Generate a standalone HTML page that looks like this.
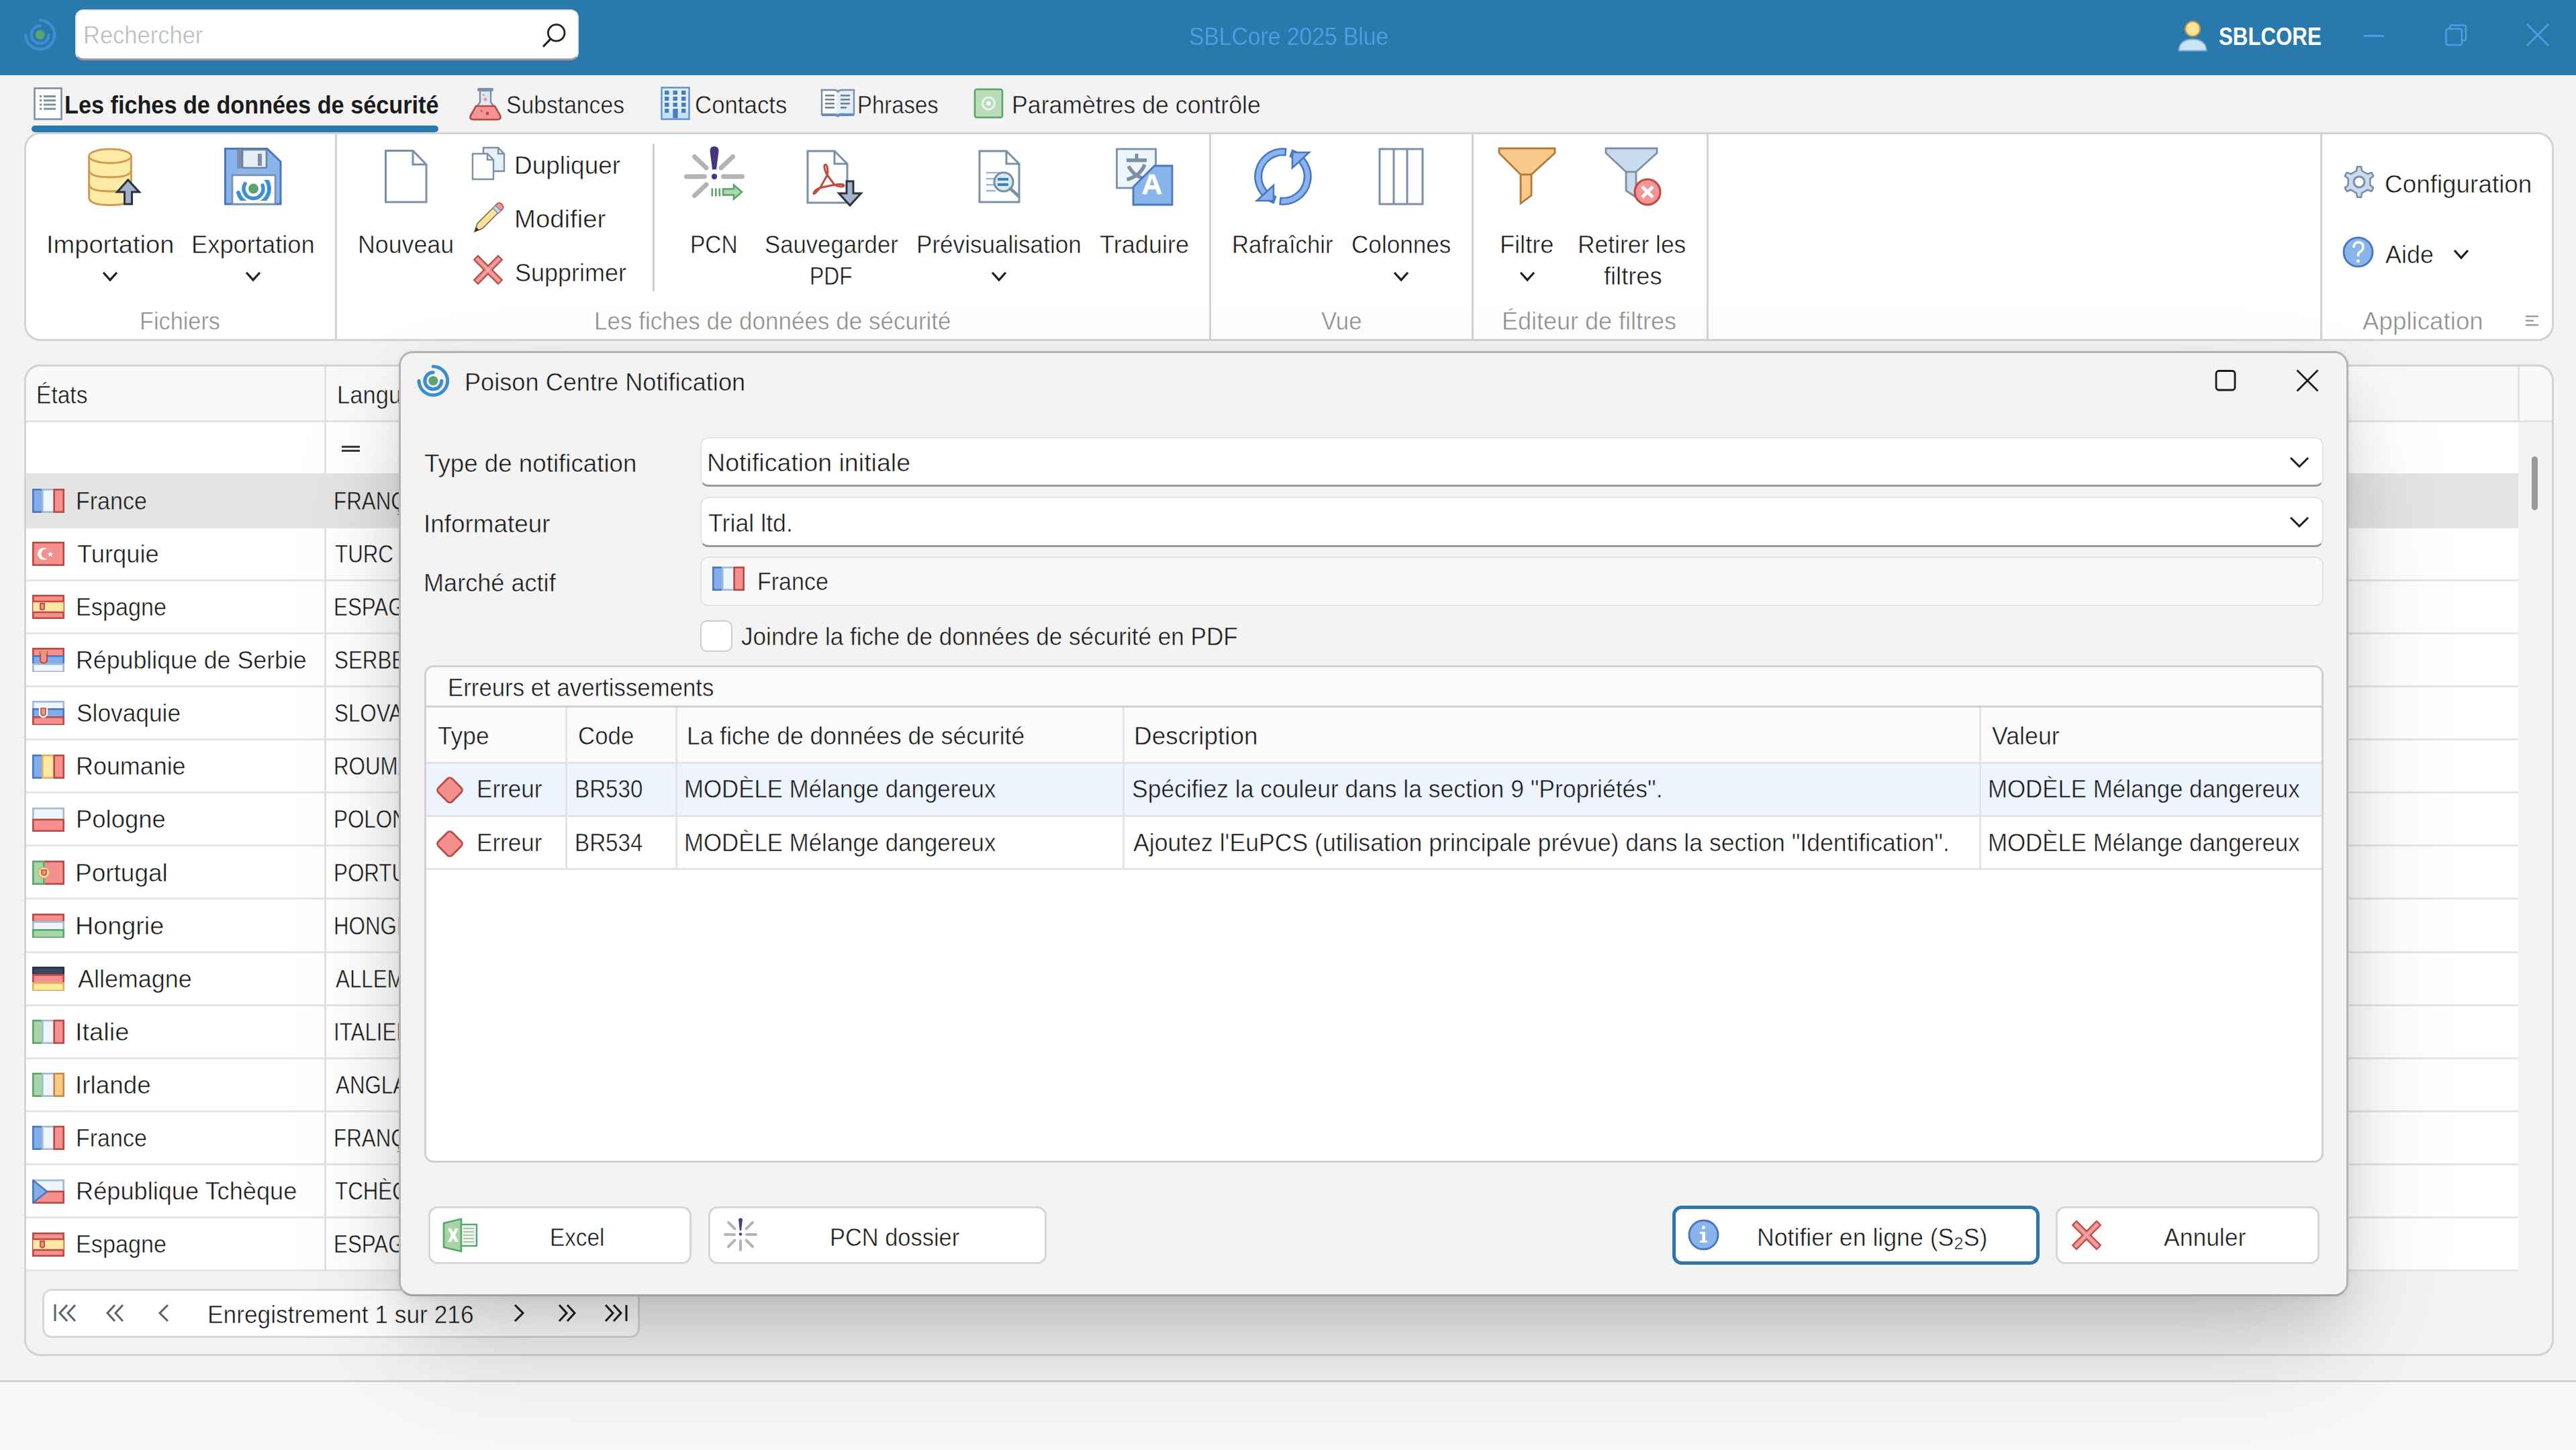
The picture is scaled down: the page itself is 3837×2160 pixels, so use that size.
<!DOCTYPE html>
<html><head><meta charset="utf-8"><style>
html,body{margin:0;padding:0;}
body{width:3837px;height:2160px;overflow:hidden;position:relative;background:#f3f3f3;font-family:'Liberation Sans', sans-serif;}
div,svg{box-sizing:border-box;}
</style></head><body>
<div style="position:absolute;left:0px;top:0px;width:3837px;height:112px;background:#2a79ad;"></div>
<svg style="position:absolute;left:34.3px;top:26.3px;" width="51.4" height="51.4" viewBox="0 0 51.4 51.4"><path d="M25.70,4.20 A21.5,21.5 0 1 1 4.20,25.70" fill="none" stroke="#3f8dd3" stroke-width="4.2" stroke-linecap="round"/><path d="M25.70,12.70 A13,13 0 1 0 38.70,25.70" fill="none" stroke="#3f8dd3" stroke-width="4.2" stroke-linecap="round"/><circle cx="25.7" cy="25.7" r="7" fill="#5aa56b"/></svg>
<div style="position:absolute;left:112px;top:14px;width:750px;height:76px;background:#fff;border-radius:12px;border:2px solid #e4e4e4;border-bottom:3px solid #9b9b9b;"></div>
<svg style="position:absolute;left:800px;top:30px;" width="50" height="50" viewBox="0 0 50 50"><circle cx="28.7" cy="18.9" r="12.3" fill="none" stroke="#1f1f1f" stroke-width="2.8"/><line x1="19.6" y1="28.6" x2="9" y2="39.5" stroke="#1f1f1f" stroke-width="3"/></svg>
<svg style="position:absolute;left:3240px;top:28px;" width="54" height="52" viewBox="0 0 54 52"><circle cx="26" cy="15" r="11" fill="#fde79b" stroke="#c9954a" stroke-width="2.2"/><path d="M5.5,47.5 C5.5,36 14,30.5 26,30.5 C38,30.5 46.5,36 46.5,47.5 Z" fill="#c7e5f8" stroke="#8ca7c7" stroke-width="2"/></svg>
<div style="position:absolute;left:3521px;top:52px;width:30px;height:3px;background:#4a9de8;"></div>
<svg style="position:absolute;left:3638px;top:32px;" width="42" height="42" viewBox="0 0 42 42"><rect x="11" y="5.5" width="24" height="23" rx="3" fill="none" stroke="#4a9de8" stroke-width="2.6"/><rect x="5.5" y="11" width="23.5" height="24" rx="3" fill="#2a79ad" stroke="#4a9de8" stroke-width="2.6"/></svg>
<svg style="position:absolute;left:3760px;top:32px;" width="40" height="40" viewBox="0 0 40 40"><path d="M4,4 L36,36 M36,4 L4,36" stroke="#4a9de8" stroke-width="2.8"/></svg>
<svg style="position:absolute;left:48px;top:128px;" width="48" height="52" viewBox="0 0 48 52"><rect x="3.5" y="3.5" width="40" height="46" fill="#fff" stroke="#7b8fa6" stroke-width="2.6"/><g fill="#7b8fa6"><rect x="11" y="14" width="3.2" height="3"/><rect x="17" y="14" width="18" height="3"/><rect x="11" y="20.2" width="3.2" height="3"/><rect x="17" y="20.2" width="18" height="3"/><rect x="11" y="26.4" width="3.2" height="3"/><rect x="17" y="26.4" width="18" height="3"/><rect x="11" y="32.6" width="3.2" height="3"/><rect x="17" y="32.6" width="18" height="3"/></g></svg>
<div style="position:absolute;left:47px;top:187px;width:606px;height:10px;background:#2a79ad;border-radius:5px;"></div>
<svg style="position:absolute;left:697px;top:128px;" width="52" height="52" viewBox="0 0 52 52"><rect x="14" y="3" width="24" height="5" rx="2" fill="#7b8fa6"/><path d="M18,7 L18,24 L4,44 Q2,50 8,50 L44,50 Q50,50 48,44 L34,24 L34,7 Z" fill="#ddeaf6" stroke="#7b8fa6" stroke-width="2.4"/><path d="M12,30 L40,30 L48,44 Q50,50 44,50 L8,50 Q2,50 4,44 Z" fill="#f49494" stroke="#b84a3f" stroke-width="2.6"/><circle cx="23.5" cy="13.5" r="1.6" fill="#f49494"/><circle cx="26" cy="20" r="2.6" fill="#f49494"/><circle cx="20" cy="37" r="1.3" fill="#b84a3f"/><circle cx="29" cy="41" r="2.4" fill="#b84a3f"/></svg>
<svg style="position:absolute;left:984px;top:129px;" width="44" height="50" viewBox="0 0 44 50"><rect x="1.5" y="1.5" width="41" height="47" fill="#dceefb" stroke="#5b8fcf" stroke-width="2.4"/><g fill="#4a7bbf"><rect x="6.0" y="6" width="6.5" height="6"/><rect x="18.5" y="6" width="6.5" height="6"/><rect x="31.0" y="6" width="6.5" height="6"/><rect x="6.0" y="15" width="6.5" height="6"/><rect x="18.5" y="15" width="6.5" height="6"/><rect x="31.0" y="15" width="6.5" height="6"/><rect x="6.0" y="24" width="6.5" height="6"/><rect x="18.5" y="24" width="6.5" height="6"/><rect x="31.0" y="24" width="6.5" height="6"/><rect x="6.0" y="33" width="6.5" height="6"/><rect x="31.0" y="33" width="6.5" height="6"/><rect x="18.5" y="33" width="7" height="14"/></g><rect x="3" y="39" width="38" height="8" fill="#bcdaf3" opacity="0.7"/><rect x="18.5" y="33" width="7" height="14" fill="#4a7bbf"/></svg>
<svg style="position:absolute;left:1222px;top:131px;" width="52" height="46" viewBox="0 0 52 46"><path d="M2,3 L20,3 Q26,3 26,7 Q26,3 32,3 L50,3 L50,39 L30,39 Q26,39 26,43 Q26,39 22,39 L2,39 Z" fill="#e3eef8" stroke="#7b8fa6" stroke-width="2.4"/><path d="M4,5 L24,5 L24,38 L4,38 Z" fill="#fff"/><g fill="#6e8197"><rect x="7" y="10" width="14" height="2.6"/><rect x="7" y="16" width="14" height="2.6"/><rect x="7" y="22" width="14" height="2.6"/><rect x="7" y="28" width="14" height="2.6"/><rect x="30" y="10" width="14" height="2.6"/><rect x="30" y="16" width="14" height="2.6"/><rect x="30" y="22" width="14" height="2.6"/><rect x="30" y="28" width="9" height="2.6"/></g><path d="M2,39 L22,39 Q26,39 26,44 Q26,39 30,39 L50,39 L50,42 L30,42 Q26,42 26,45 Q26,42 22,42 L2,42 Z" fill="#5b8fcf"/></svg>
<svg style="position:absolute;left:1450px;top:131px;" width="45" height="46" viewBox="0 0 45 46"><rect x="2" y="2" width="41" height="42" rx="3" fill="#b9dcb9" stroke="#5aa56b" stroke-width="2.6"/><circle cx="22.5" cy="23" r="9" fill="none" stroke="#e8f4e8" stroke-width="3"/><circle cx="22.5" cy="23" r="3.2" fill="#fff"/></svg>
<div style="position:absolute;left:36px;top:197px;width:3768px;height:311px;background:#fff;border:3px solid #d3d3d3;border-radius:24px;"></div>
<div style="position:absolute;left:499px;top:199px;width:3px;height:307px;background:#d3d3d3;"></div>
<div style="position:absolute;left:1801px;top:199px;width:3px;height:307px;background:#d3d3d3;"></div>
<div style="position:absolute;left:2192px;top:199px;width:3px;height:307px;background:#d3d3d3;"></div>
<div style="position:absolute;left:2542px;top:199px;width:3px;height:307px;background:#d3d3d3;"></div>
<div style="position:absolute;left:3456px;top:199px;width:3px;height:307px;background:#d3d3d3;"></div>
<div style="position:absolute;left:972px;top:214px;width:3px;height:220px;background:#cfcfcf;"></div>
<svg style="position:absolute;left:128px;top:218px;" width="86" height="90" viewBox="0 0 86 90"><path d="M4.6,14 L4.6,76 Q4.6,87.5 36,87.5 Q67.4,87.5 67.4,76 L67.4,14" fill="#fdeba6" stroke="#d29b52" stroke-width="3"/><ellipse cx="36" cy="14.5" rx="31.4" ry="10.5" fill="#fdeba6" stroke="#d29b52" stroke-width="3"/><path d="M4.6,35 Q4.6,46 36,46 Q67.4,46 67.4,35" fill="none" stroke="#d29b52" stroke-width="3"/><path d="M4.6,56 Q4.6,67 36,67 Q50,67 58,65" fill="none" stroke="#d29b52" stroke-width="3"/><path d="M62.7,50 L79.5,68 L68.5,68 L68.5,86 L57.5,86 L57.5,68 L46.5,68 Z" fill="#9fb0c8" stroke="#2c2f3c" stroke-width="3"/></svg>
<svg style="position:absolute;left:151.0px;top:402.5px;" width="26" height="17" viewBox="0 0 26 17"><path d="M3,3 L13.0,14 L23,3" fill="none" stroke="#1f1f1f" stroke-width="3.2"/></svg>
<svg style="position:absolute;left:334px;top:220px;" width="86" height="86" viewBox="0 0 86 86"><path d="M1.5,1.5 L64,1.5 L84,21 L84,84 L1.5,84 Z" fill="#89b4ec" stroke="#4a77bf" stroke-width="3"/><rect x="19" y="2" width="8" height="29" fill="#7d8fa8"/><rect x="27" y="3" width="36" height="27" rx="2" fill="#e6eef5" stroke="#6e8197" stroke-width="2.6"/><rect x="50" y="9" width="6" height="18" fill="#7d8fa8"/><rect x="12" y="41" width="64" height="43" fill="#fff" stroke="#7b8fa6" stroke-width="2.6"/><clipPath id="fl"><rect x="13.5" y="48" width="61" height="31"/></clipPath><g clip-path="url(#fl)"><path d="M43.50,37.60 A23.4,23.4 0 1 1 20.90,67.06" fill="none" stroke="#3d8ed3" stroke-width="6" stroke-linecap="round"/></g><path d="M57.13,56.04 A14.5,14.5 0 1 1 30.94,53.75" fill="none" stroke="#3d8ed3" stroke-width="5.5" stroke-linecap="round"/><circle cx="43.5" cy="61" r="7.5" fill="#5aa56b"/></svg>
<svg style="position:absolute;left:364.0px;top:402.5px;" width="26" height="17" viewBox="0 0 26 17"><path d="M3,3 L13.0,14 L23,3" fill="none" stroke="#1f1f1f" stroke-width="3.2"/></svg>
<svg style="position:absolute;left:572px;top:222px;" width="66" height="82" viewBox="0 0 66 82"><path d="M2.5,2.5 L43,2.5 L63,23 L63,79 L2.5,79 Z" fill="#fff" stroke="#7b8fa6" stroke-width="3"/><path d="M43,2.5 L43,23 L63,23" fill="none" stroke="#7b8fa6" stroke-width="3"/></svg>
<svg style="position:absolute;left:702px;top:218px;" width="52" height="52" viewBox="0 0 52 52"><path d="M18,2 L40,2 L49,11 L49,37 L18,37 Z" fill="#e6f0f9" stroke="#7b8fa6" stroke-width="2.4"/><path d="M40,2 L40,11 L49,11" fill="none" stroke="#7b8fa6" stroke-width="2.4"/><path d="M2,11 L24,11 L33,20 L33,49 L2,49 Z" fill="#fff" stroke="#7b8fa6" stroke-width="2.4"/><path d="M24,11 L24,20 L33,20" fill="none" stroke="#7b8fa6" stroke-width="2.4"/></svg>
<svg style="position:absolute;left:704px;top:300px;" width="48" height="48" viewBox="0 0 48 48"><path d="M3,45 L7,33 L36,4 Q40,1 43,4 Q47,8 44,11 L15,40 Z" fill="#fde39a" stroke="#7b6a4a" stroke-width="1.6"/><path d="M33,7 L41,15 L45,11 Q47,8 43,4 Q40,1 37,3 Z" fill="#f49494" stroke="#b84a3f" stroke-width="1.6"/><path d="M30,10 L38,18 L42,14 L34,6 Z" fill="#c9dcee" stroke="#7b8fa6" stroke-width="1.6"/><path d="M3,45 L5,38 L10,43 Z" fill="#333"/></svg>
<svg style="position:absolute;left:704px;top:379px;" width="46" height="46" viewBox="0 0 46 46"><g transform="scale(1.0)"><path d="M2,8 L8,2 L23,17 L38,2 L44,8 L29,23 L44,38 L38,44 L23,29 L8,44 L2,38 L17,23 Z" fill="#f08a8a" stroke="#bb4a42" stroke-width="2"/><path d="M6,6 L40,40 M40,6 L6,40" stroke="#fbc4c4" stroke-width="1.2" opacity="0.9"/></g></svg>
<svg style="position:absolute;left:1018px;top:217px;" width="92" height="82.0" viewBox="0 0 92 82.0"><g transform="scale(1.0)"><g stroke="#b4b4b8" stroke-width="7" stroke-linecap="round"><line x1="4.5" y1="46" x2="31.5" y2="46"/><line x1="59.5" y1="46" x2="87.5" y2="46"/><line x1="16.5" y1="16.5" x2="34" y2="33"/><line x1="73.5" y1="16.5" x2="56" y2="33"/><line x1="16.5" y1="74.5" x2="34" y2="58"/></g><path d="M39.5,8 Q39.5,1 46,1 Q52.5,1 52.5,8 L49,35.5 L43,35.5 Z" fill="#47357f"/><circle cx="46" cy="46" r="4.2" fill="#47357f"/><g fill="#5aa56b"><rect x="41.5" y="63.5" width="2.6" height="12"/><rect x="47" y="63.5" width="2.6" height="12"/><rect x="52.5" y="63.5" width="2.6" height="12"/></g><path d="M59,64.5 L75,64.5 L75,58.5 L87,69 L75,79.5 L75,73.5 L59,73.5 Z" fill="#a9dab0" stroke="#5aa56b" stroke-width="2.6"/></g></svg>
<svg style="position:absolute;left:1200px;top:222px;" width="88" height="90" viewBox="0 0 88 90"><path d="M3,3 L43,3 L62,22 L62,80 L3,80 Z" fill="#fff" stroke="#7b8fa6" stroke-width="3"/><path d="M43,3 L43,22 L62,22" fill="none" stroke="#7b8fa6" stroke-width="3"/><path d="M32.3,38.7 L21.6,57.8 C17,63 12.5,68 12,66.5 C11.5,64 16,59.5 21.6,57.8 L43,53.3 C50,52 57.5,52 57,54.5 C56.5,57 49,56 43,53.3 L32.3,38.7 C28,32 26.5,23 29.5,23.3 C32.5,23.6 33.5,31 32.3,38.7 Z" fill="none" stroke="#c44a3a" stroke-width="3" stroke-linejoin="round"/><path d="M61,48 L71,48 L71,66 L82.5,66 L66,84 L49.5,66 L61,66 Z" fill="#a3b4cc" stroke="#30323c" stroke-width="3"/></svg>
<svg style="position:absolute;left:1456px;top:222px;" width="70" height="84" viewBox="0 0 70 84"><path d="M3,3 L43,3 L62,22 L62,79 L3,79 Z" fill="#fff" stroke="#7b8fa6" stroke-width="3"/><path d="M43,3 L43,22 L62,22" fill="none" stroke="#7b8fa6" stroke-width="3"/><g fill="#9cb8e0"><rect x="13" y="34" width="22" height="2.5"/><rect x="13" y="43" width="14" height="2.5"/><rect x="13" y="52" width="14" height="2.5"/><rect x="13" y="61" width="14" height="2.5"/></g><circle cx="39" cy="49" r="14" fill="#d8ecf8" stroke="#7b8fa6" stroke-width="3.2"/><path d="M30,43 L46,43 L46,47 L30,47 Z M30,51 L46,51 L46,55 L30,55 Z" fill="#3d7ec2"/><line x1="49" y1="59" x2="61" y2="70" stroke="#7b8fa6" stroke-width="5" stroke-linecap="round"/></svg>
<svg style="position:absolute;left:1475.0px;top:402.5px;" width="26" height="17" viewBox="0 0 26 17"><path d="M3,3 L13.0,14 L23,3" fill="none" stroke="#1f1f1f" stroke-width="3.2"/></svg>
<svg style="position:absolute;left:1660px;top:219px;" width="88" height="88" viewBox="0 0 88 88"><rect x="3.5" y="3" width="58" height="58" fill="#eef5fc" stroke="#7b8fa6" stroke-width="2.8"/><rect x="30.5" y="10" width="5" height="8" fill="#7b8fa6"/><rect x="18" y="17" width="30" height="5.5" fill="#7b8fa6"/><path d="M21,28.5 Q29,44 46,47.5 M45,26 Q39,43 18.5,48.5" fill="none" stroke="#7b8fa6" stroke-width="5.5"/><path d="M59.5,28 L86,28 L86,86 L28,86 L28,59.5 Z" fill="#8ab5ec" stroke="#4a77bf" stroke-width="2.8"/><path d="M41,70.5 L52,40.7 L60,40.7 L71,70.5 L64,70.5 L61.5,63 L50.5,63 L48,70.5 Z M52.5,57 L59.5,57 L56,46.5 Z" fill="#fff"/></svg>
<svg style="position:absolute;left:1867px;top:219px;" width="88" height="88" viewBox="0 0 88 88"><path d="M48.34,2.73 A41.5,41.5 0 0 0 29.81,83.00 L33.06,74.07 A32,32 0 0 1 47.34,12.18 Z" fill="#89b4ec" stroke="#4a77bf" stroke-width="2.6"/><path d="M39.66,85.27 A41.5,41.5 0 0 0 58.19,5.00 L54.94,13.93 A32,32 0 0 1 40.66,75.82 Z" fill="#89b4ec" stroke="#4a77bf" stroke-width="2.6"/><path d="M5,80 L30,80 L30,57 Z" fill="#89b4ec" stroke="#4a77bf" stroke-width="2.6" stroke-linejoin="miter"/><path d="M83,8 L58,8 L58,31 Z" fill="#89b4ec" stroke="#4a77bf" stroke-width="2.6" stroke-linejoin="miter"/></svg>
<svg style="position:absolute;left:2052px;top:219px;" width="70" height="88" viewBox="0 0 70 88"><rect x="3" y="3" width="64" height="82" fill="#fff" stroke="#7b8fa6" stroke-width="3"/><line x1="24" y1="3" x2="24" y2="85" stroke="#7b8fa6" stroke-width="3"/><line x1="44" y1="3" x2="44" y2="85" stroke="#7b8fa6" stroke-width="3"/></svg>
<svg style="position:absolute;left:2074.0px;top:402.5px;" width="26" height="17" viewBox="0 0 26 17"><path d="M3,3 L13.0,14 L23,3" fill="none" stroke="#1f1f1f" stroke-width="3.2"/></svg>
<svg style="position:absolute;left:2231px;top:219px;" width="88" height="88" viewBox="0 0 88 88"><path d="M2,2 L85,2 L85,9 L50,41 L50,72 L34,84 L34,41 L2,9 Z" fill="#fbc98a" stroke="#b17a3a" stroke-width="2.8"/><line x1="34" y1="41" x2="50" y2="41" stroke="#b17a3a" stroke-width="2.8"/></svg>
<svg style="position:absolute;left:2262.0px;top:402.5px;" width="26" height="17" viewBox="0 0 26 17"><path d="M3,3 L13.0,14 L23,3" fill="none" stroke="#1f1f1f" stroke-width="3.2"/></svg>
<svg style="position:absolute;left:2390px;top:219px;" width="90" height="92" viewBox="0 0 90 92"><path d="M2,2 L78,2 L78,9 L47,37 L47,75 L32,65 L32,37 L2,9 Z" fill="#c9dcee" stroke="#7b8fa6" stroke-width="2.8"/><line x1="32" y1="37" x2="47" y2="37" stroke="#7b8fa6" stroke-width="2.8"/><circle cx="64" cy="67" r="19" fill="#f49494" stroke="#bb4a42" stroke-width="3"/><path d="M56,59 L72,75 M72,59 L56,75" stroke="#fff" stroke-width="5"/></svg>
<svg style="position:absolute;left:3490px;top:245px;transform:rotate(0deg)" width="48" height="52" viewBox="0 0 48 52"><path d="M19.96,9.49 L21.02,3.19 L26.98,3.19 L28.04,9.49 L36.28,14.24 L42.26,12.01 L45.24,17.18 L40.32,21.24 L40.32,30.76 L45.24,34.82 L42.26,39.99 L36.28,37.76 L28.04,42.51 L26.98,48.81 L21.02,48.81 L19.96,42.51 L11.72,37.76 L5.74,39.99 L2.76,34.82 L7.68,30.76 L7.68,21.24 L2.76,17.18 L5.74,12.01 L11.72,14.24 Z" fill="#c9dcee" stroke="#7b8fa6" stroke-width="2.6" stroke-linejoin="round"/><circle cx="24" cy="26" r="8" fill="#fff" stroke="#7b8fa6" stroke-width="3.2"/></svg>
<svg style="position:absolute;left:3488px;top:351px;" width="50" height="50" viewBox="0 0 50 50"><circle cx="24.5" cy="24.5" r="21.5" fill="#89b4ec" stroke="#4a77bf" stroke-width="3"/><path d="M18,18 Q18,10 25,10 Q32,10 32,17 Q32,22 26,25 Q24.5,26 24.5,31" fill="none" stroke="#fff" stroke-width="3.4"/><circle cx="24.5" cy="38" r="2.4" fill="#fff"/></svg>
<svg style="position:absolute;left:3653.0px;top:370.0px;" width="26" height="17" viewBox="0 0 26 17"><path d="M3,3 L13.0,14 L23,3" fill="none" stroke="#1f1f1f" stroke-width="3.2"/></svg>
<svg style="position:absolute;left:3760px;top:468px;" width="24" height="20" viewBox="0 0 24 20"><g fill="#9a9a9a"><rect x="2" y="2" width="19" height="2.4"/><rect x="2" y="8.5" width="12" height="2.4"/><rect x="2" y="15" width="19" height="2.4"/></g></svg>
<div style="position:absolute;left:36px;top:543px;width:3768px;height:477px;background:#f3f3f3;border:3px solid #d3d3d3;border-radius:24px;"></div>
<div style="position:absolute;left:36px;top:543px;width:3768px;height:1477px;background:#f3f3f3;border:3px solid #d3d3d3;border-radius:24px;"></div>
<div style="position:absolute;left:0px;top:2056px;width:3837px;height:3px;background:#d0d0d0;"></div>
<div style="position:absolute;left:0px;top:2059px;width:3837px;height:101px;background:#f8f8f8;"></div>
<div style="position:absolute;left:123.5px;top:35.2px;font-size:36px;line-height:36px;font-weight:400;color:#b8bcb9;white-space:nowrap;transform:scaleX(0.9585);transform-origin:0 0;-webkit-text-stroke:0.5px #ffffff;">Rechercher</div>
<div style="position:absolute;left:1770.5px;top:37.2px;font-size:36px;line-height:36px;font-weight:400;color:#4fa3ea;white-space:nowrap;transform:scaleX(0.9340);transform-origin:0 0;-webkit-text-stroke:0.5px #2a79ad;">SBLCore 2025 Blue</div>
<div style="position:absolute;left:3305.1px;top:37.2px;font-size:36px;line-height:36px;font-weight:700;color:#ffffff;white-space:nowrap;transform:scaleX(0.8678);transform-origin:0 0;">SBLCORE</div>
<div style="position:absolute;left:95.9px;top:139.2px;font-size:36px;line-height:36px;font-weight:700;color:#1b1b1b;white-space:nowrap;transform:scaleX(0.9509);transform-origin:0 0;">Les fiches de données de sécurité</div>
<div style="position:absolute;left:753.8px;top:139.2px;font-size:36px;line-height:36px;font-weight:400;color:#1b1b1b;white-space:nowrap;transform:scaleX(0.9357);transform-origin:0 0;-webkit-text-stroke:0.5px #f3f3f3;">Substances</div>
<div style="position:absolute;left:1035.1px;top:139.2px;font-size:36px;line-height:36px;font-weight:400;color:#1b1b1b;white-space:nowrap;transform:scaleX(0.9669);transform-origin:0 0;-webkit-text-stroke:0.5px #f3f3f3;">Contacts</div>
<div style="position:absolute;left:1277.0px;top:139.2px;font-size:36px;line-height:36px;font-weight:400;color:#1b1b1b;white-space:nowrap;transform:scaleX(0.9133);transform-origin:0 0;-webkit-text-stroke:0.5px #f3f3f3;">Phrases</div>
<div style="position:absolute;left:1507.0px;top:139.2px;font-size:36px;line-height:36px;font-weight:400;color:#1b1b1b;white-space:nowrap;transform:scaleX(0.9908);transform-origin:0 0;-webkit-text-stroke:0.5px #f3f3f3;">Paramètres de contrôle</div>
<div style="position:absolute;left:68.8px;top:346.6px;font-size:36px;line-height:36px;font-weight:400;color:#1b1b1b;white-space:nowrap;transform:scaleX(1.0571);transform-origin:0 0;-webkit-text-stroke:0.5px #ffffff;">Importation</div>
<div style="position:absolute;left:285.0px;top:346.6px;font-size:36px;line-height:36px;font-weight:400;color:#1b1b1b;white-space:nowrap;transform:scaleX(1.0090);transform-origin:0 0;-webkit-text-stroke:0.5px #ffffff;">Exportation</div>
<div style="position:absolute;left:208.0px;top:460.9px;font-size:36px;line-height:36px;font-weight:400;color:#8f8f8f;white-space:nowrap;transform:scaleX(0.9516);transform-origin:0 0;-webkit-text-stroke:0.5px #ffffff;">Fichiers</div>
<div style="position:absolute;left:533.0px;top:346.6px;font-size:36px;line-height:36px;font-weight:400;color:#1b1b1b;white-space:nowrap;transform:scaleX(0.9928);transform-origin:0 0;-webkit-text-stroke:0.5px #ffffff;">Nouveau</div>
<div style="position:absolute;left:765.9px;top:229.0px;font-size:36px;line-height:36px;font-weight:400;color:#1b1b1b;white-space:nowrap;transform:scaleX(1.0252);transform-origin:0 0;-webkit-text-stroke:0.5px #ffffff;">Dupliquer</div>
<div style="position:absolute;left:765.8px;top:309.2px;font-size:36px;line-height:36px;font-weight:400;color:#1b1b1b;white-space:nowrap;transform:scaleX(1.0640);transform-origin:0 0;-webkit-text-stroke:0.5px #ffffff;">Modifier</div>
<div style="position:absolute;left:767.0px;top:389.2px;font-size:36px;line-height:36px;font-weight:400;color:#1b1b1b;white-space:nowrap;-webkit-text-stroke:0.5px #ffffff;">Supprimer</div>
<div style="position:absolute;left:1027.8px;top:346.6px;font-size:36px;line-height:36px;font-weight:400;color:#1b1b1b;white-space:nowrap;transform:scaleX(0.9314);transform-origin:0 0;-webkit-text-stroke:0.5px #ffffff;">PCN</div>
<div style="position:absolute;left:1139.4px;top:346.6px;font-size:36px;line-height:36px;font-weight:400;color:#1b1b1b;white-space:nowrap;transform:scaleX(0.9642);transform-origin:0 0;-webkit-text-stroke:0.5px #ffffff;">Sauvegarder</div>
<div style="position:absolute;left:1206.4px;top:393.6px;font-size:36px;line-height:36px;font-weight:400;color:#1b1b1b;white-space:nowrap;transform:scaleX(0.8824);transform-origin:0 0;-webkit-text-stroke:0.5px #ffffff;">PDF</div>
<div style="position:absolute;left:1365.1px;top:346.6px;font-size:36px;line-height:36px;font-weight:400;color:#1b1b1b;white-space:nowrap;transform:scaleX(0.9745);transform-origin:0 0;-webkit-text-stroke:0.5px #ffffff;">Prévisualisation</div>
<div style="position:absolute;left:1637.6px;top:346.6px;font-size:36px;line-height:36px;font-weight:400;color:#1b1b1b;white-space:nowrap;transform:scaleX(1.0031);transform-origin:0 0;-webkit-text-stroke:0.5px #ffffff;">Traduire</div>
<div style="position:absolute;left:885.1px;top:460.9px;font-size:36px;line-height:36px;font-weight:400;color:#8f8f8f;white-space:nowrap;transform:scaleX(0.9729);transform-origin:0 0;-webkit-text-stroke:0.5px #ffffff;">Les fiches de données de sécurité</div>
<div style="position:absolute;left:1835.1px;top:346.6px;font-size:36px;line-height:36px;font-weight:400;color:#1b1b1b;white-space:nowrap;transform:scaleX(0.9647);transform-origin:0 0;-webkit-text-stroke:0.5px #ffffff;">Rafraîchir</div>
<div style="position:absolute;left:2012.9px;top:346.6px;font-size:36px;line-height:36px;font-weight:400;color:#1b1b1b;white-space:nowrap;transform:scaleX(0.9758);transform-origin:0 0;-webkit-text-stroke:0.5px #ffffff;">Colonnes</div>
<div style="position:absolute;left:1967.8px;top:460.9px;font-size:36px;line-height:36px;font-weight:400;color:#8f8f8f;white-space:nowrap;transform:scaleX(0.9639);transform-origin:0 0;-webkit-text-stroke:0.5px #ffffff;">Vue</div>
<div style="position:absolute;left:2234.3px;top:346.6px;font-size:36px;line-height:36px;font-weight:400;color:#1b1b1b;white-space:nowrap;transform:scaleX(1.0039);transform-origin:0 0;-webkit-text-stroke:0.5px #ffffff;">Filtre</div>
<div style="position:absolute;left:2350.1px;top:346.6px;font-size:36px;line-height:36px;font-weight:400;color:#1b1b1b;white-space:nowrap;transform:scaleX(0.9831);transform-origin:0 0;-webkit-text-stroke:0.5px #ffffff;">Retirer les</div>
<div style="position:absolute;left:2388.5px;top:393.6px;font-size:36px;line-height:36px;font-weight:400;color:#1b1b1b;white-space:nowrap;transform:scaleX(1.0059);transform-origin:0 0;-webkit-text-stroke:0.5px #ffffff;">filtres</div>
<div style="position:absolute;left:2237.0px;top:460.9px;font-size:36px;line-height:36px;font-weight:400;color:#8f8f8f;white-space:nowrap;-webkit-text-stroke:0.5px #ffffff;">Éditeur de filtres</div>
<div style="position:absolute;left:3552.3px;top:256.9px;font-size:36px;line-height:36px;font-weight:400;color:#1b1b1b;white-space:nowrap;transform:scaleX(1.0243);transform-origin:0 0;-webkit-text-stroke:0.5px #ffffff;">Configuration</div>
<div style="position:absolute;left:3553.0px;top:361.6px;font-size:36px;line-height:36px;font-weight:400;color:#1b1b1b;white-space:nowrap;-webkit-text-stroke:0.5px #ffffff;">Aide</div>
<div style="position:absolute;left:3519.0px;top:460.9px;font-size:36px;line-height:36px;font-weight:400;color:#8f8f8f;white-space:nowrap;transform:scaleX(1.0207);transform-origin:0 0;-webkit-text-stroke:0.5px #ffffff;">Application</div>
<div style="position:absolute;left:39px;top:546px;width:3762px;height:81px;background:#f9f9f9;border-radius:21px 21px 0 0;"></div>
<div style="position:absolute;left:39px;top:626px;width:3712px;height:3px;background:#e3e3e3;"></div>
<div style="position:absolute;left:3751px;top:626px;width:50px;height:3px;background:#e3e3e3;"></div>
<div style="position:absolute;left:39px;top:629px;width:3712px;height:76px;background:#fff;"></div>
<div style="position:absolute;left:3751px;top:629px;width:50px;height:1264px;background:#f3f3f3;"></div>
<div style="position:absolute;left:3750px;top:546px;width:3px;height:81px;background:#e3e3e3;"></div>
<div style="position:absolute;left:39px;top:705.0px;width:3712px;height:79.12px;background:#e4e4e4;"></div>
<div style="position:absolute;left:39px;top:784.12px;width:3712px;height:79.12px;background:#fff;"></div>
<div style="position:absolute;left:39px;top:783.62px;width:3712px;height:3px;background:#e6e6e6;"></div>
<div style="position:absolute;left:39px;top:863.24px;width:3712px;height:79.12px;background:#fff;"></div>
<div style="position:absolute;left:39px;top:862.74px;width:3712px;height:3px;background:#e6e6e6;"></div>
<div style="position:absolute;left:39px;top:942.36px;width:3712px;height:79.12px;background:#fff;"></div>
<div style="position:absolute;left:39px;top:941.86px;width:3712px;height:3px;background:#e6e6e6;"></div>
<div style="position:absolute;left:39px;top:1021.48px;width:3712px;height:79.12px;background:#fff;"></div>
<div style="position:absolute;left:39px;top:1020.98px;width:3712px;height:3px;background:#e6e6e6;"></div>
<div style="position:absolute;left:39px;top:1100.6px;width:3712px;height:79.12px;background:#fff;"></div>
<div style="position:absolute;left:39px;top:1100.1px;width:3712px;height:3px;background:#e6e6e6;"></div>
<div style="position:absolute;left:39px;top:1179.72px;width:3712px;height:79.12px;background:#fff;"></div>
<div style="position:absolute;left:39px;top:1179.22px;width:3712px;height:3px;background:#e6e6e6;"></div>
<div style="position:absolute;left:39px;top:1258.8400000000001px;width:3712px;height:79.12px;background:#fff;"></div>
<div style="position:absolute;left:39px;top:1258.3400000000001px;width:3712px;height:3px;background:#e6e6e6;"></div>
<div style="position:absolute;left:39px;top:1337.96px;width:3712px;height:79.12px;background:#fff;"></div>
<div style="position:absolute;left:39px;top:1337.46px;width:3712px;height:3px;background:#e6e6e6;"></div>
<div style="position:absolute;left:39px;top:1417.08px;width:3712px;height:79.12px;background:#fff;"></div>
<div style="position:absolute;left:39px;top:1416.58px;width:3712px;height:3px;background:#e6e6e6;"></div>
<div style="position:absolute;left:39px;top:1496.2px;width:3712px;height:79.12px;background:#fff;"></div>
<div style="position:absolute;left:39px;top:1495.7px;width:3712px;height:3px;background:#e6e6e6;"></div>
<div style="position:absolute;left:39px;top:1575.3200000000002px;width:3712px;height:79.12px;background:#fff;"></div>
<div style="position:absolute;left:39px;top:1574.8200000000002px;width:3712px;height:3px;background:#e6e6e6;"></div>
<div style="position:absolute;left:39px;top:1654.44px;width:3712px;height:79.12px;background:#fff;"></div>
<div style="position:absolute;left:39px;top:1653.94px;width:3712px;height:3px;background:#e6e6e6;"></div>
<div style="position:absolute;left:39px;top:1733.56px;width:3712px;height:79.12px;background:#fff;"></div>
<div style="position:absolute;left:39px;top:1733.06px;width:3712px;height:3px;background:#e6e6e6;"></div>
<div style="position:absolute;left:39px;top:1812.68px;width:3712px;height:79.12px;background:#fff;"></div>
<div style="position:absolute;left:39px;top:1812.18px;width:3712px;height:3px;background:#e6e6e6;"></div>
<div style="position:absolute;left:39px;top:1891.3000000000002px;width:3712px;height:3px;background:#e6e6e6;"></div>
<div style="position:absolute;left:63px;top:1920px;width:890px;height:73px;background:#fff;border:3px solid #d8d8d8;border-radius:14px;"></div>
<div style="position:absolute;left:3771px;top:680px;width:9px;height:80px;background:#9a9a9a;border-radius:5px;"></div>
<div style="position:absolute;left:483px;top:546px;width:3px;height:1347px;background:#e3e3e3;"></div>
<div style="position:absolute;left:509px;top:664px;width:27px;height:3px;background:#3a3a3a;"></div>
<div style="position:absolute;left:509px;top:670px;width:27px;height:3px;background:#3a3a3a;"></div>
<svg style="position:absolute;left:48px;top:728.0px;" width="48" height="36" viewBox="0 0 48 36"><rect x="1.3" y="1.3" width="14" height="33.4" fill="#82adeb" stroke="#4a77bf" stroke-width="2.6"/><rect x="15.3" y="1.3" width="17.4" height="33.4" fill="#eef5fc" stroke="#a3b8d6" stroke-width="2.6"/><rect x="32.7" y="1.3" width="14" height="33.4" fill="#f49090" stroke="#bb4a42" stroke-width="2.6"/></svg>
<svg style="position:absolute;left:48px;top:807.12px;" width="48" height="36" viewBox="0 0 48 36"><rect x="1.3" y="1.3" width="45.4" height="33.4" fill="#f49090" stroke="#bb4a42" stroke-width="2.6"/><circle cx="17" cy="18" r="9" fill="#fff"/><circle cx="20.5" cy="18" r="7.2" fill="#f49090"/><path d="M27,14.5 L28.2,17.3 L31.2,17.5 L28.9,19.4 L29.6,22.3 L27,20.7 L24.4,22.3 L25.1,19.4 L22.8,17.5 L25.8,17.3 Z" fill="#fff"/></svg>
<svg style="position:absolute;left:48px;top:886.24px;" width="48" height="36" viewBox="0 0 48 36"><rect x="1.3" y="1.3" width="45.4" height="33.4" fill="#f49090" stroke="#bb4a42" stroke-width="2.6"/><rect x="1.3" y="10" width="45.4" height="16" fill="#fde9a0"/><line x1="1.3" y1="10" x2="46.7" y2="10" stroke="#bb4a42" stroke-width="2.6"/><line x1="1.3" y1="26" x2="46.7" y2="26" stroke="#bb4a42" stroke-width="2.6"/><path d="M12,13 L18,13 L18,21 Q15,24 12,21 Z" fill="#f49090" stroke="#bb4a42" stroke-width="1.8"/></svg>
<svg style="position:absolute;left:48px;top:965.36px;" width="48" height="36" viewBox="0 0 48 36"><rect x="1.3" y="1.3" width="45.4" height="11" fill="#f49090" stroke="#bb4a42" stroke-width="2.6"/><rect x="1.3" y="12.3" width="45.4" height="12" fill="#82adeb" stroke="#4a77bf" stroke-width="2.6"/><rect x="1.3" y="24.3" width="45.4" height="11.4" fill="#eef5fc" stroke="#a3b8d6" stroke-width="2.6"/><path d="M12,6 L22,6 L22,20 Q17,26 12,20 Z" fill="#f49090" stroke="#bb4a42" stroke-width="2"/><rect x="12" y="5" width="10" height="4" fill="#d9a060"/></svg>
<svg style="position:absolute;left:48px;top:1044.48px;" width="48" height="36" viewBox="0 0 48 36"><rect x="1.3" y="1.3" width="45.4" height="11" fill="#eef5fc" stroke="#a3b8d6" stroke-width="2.6"/><rect x="1.3" y="12.3" width="45.4" height="12" fill="#82adeb" stroke="#4a77bf" stroke-width="2.6"/><rect x="1.3" y="24.3" width="45.4" height="11.4" fill="#f49090" stroke="#bb4a42" stroke-width="2.6"/><path d="M11,9 L22,9 L22,21 Q16.5,28 11,21 Z" fill="#fff" stroke="#fff" stroke-width="2"/><path d="M13,11 L20,11 L20,20 Q16.5,24 13,20 Z" fill="#f49090" stroke="#bb4a42" stroke-width="1.6"/></svg>
<svg style="position:absolute;left:48px;top:1123.6px;" width="48" height="36" viewBox="0 0 48 36"><rect x="1.3" y="1.3" width="14" height="33.4" fill="#82adeb" stroke="#4a77bf" stroke-width="2.6"/><rect x="15.3" y="1.3" width="17.4" height="33.4" fill="#fde9a0" stroke="#e0b060" stroke-width="2.6"/><rect x="32.7" y="1.3" width="14" height="33.4" fill="#f49090" stroke="#bb4a42" stroke-width="2.6"/></svg>
<svg style="position:absolute;left:48px;top:1202.72px;" width="48" height="36" viewBox="0 0 48 36"><rect x="1.3" y="1.3" width="45.4" height="16.7" fill="#eef5fc" stroke="#a3b8d6" stroke-width="2.6"/><rect x="1.3" y="18" width="45.4" height="16.7" fill="#f49090" stroke="#bb4a42" stroke-width="2.6"/></svg>
<svg style="position:absolute;left:48px;top:1281.8400000000001px;" width="48" height="36" viewBox="0 0 48 36"><rect x="1.3" y="1.3" width="45.4" height="33.4" fill="#f49090" stroke="#bb4a42" stroke-width="2.6"/><rect x="1.3" y="1.3" width="16" height="33.4" fill="#a8d4a8" stroke="#5aa56b" stroke-width="2.6"/><circle cx="17.5" cy="18" r="8" fill="#fde9a0" stroke="#e0b060" stroke-width="1.5"/><path d="M14,14 L21,14 L21,20 Q17.5,24 14,20 Z" fill="#f49090" stroke="#bb4a42" stroke-width="1.6"/></svg>
<svg style="position:absolute;left:48px;top:1360.96px;" width="48" height="36" viewBox="0 0 48 36"><rect x="1.3" y="1.3" width="45.4" height="11" fill="#f49090" stroke="#bb4a42" stroke-width="2.6"/><rect x="1.3" y="12.3" width="45.4" height="12" fill="#eef5fc" stroke="#a3b8d6" stroke-width="2.6"/><rect x="1.3" y="24.3" width="45.4" height="11.4" fill="#a8d4a8" stroke="#5aa56b" stroke-width="2.6"/></svg>
<svg style="position:absolute;left:48px;top:1440.08px;" width="48" height="36" viewBox="0 0 48 36"><rect x="1.3" y="1.3" width="45.4" height="11" fill="#3a4660" stroke="#2a3040" stroke-width="2.6"/><rect x="1.3" y="12.3" width="45.4" height="12" fill="#f49090" stroke="#bb4a42" stroke-width="2.6"/><rect x="1.3" y="24.3" width="45.4" height="11.4" fill="#fde9a0" stroke="#e0b060" stroke-width="2.6"/></svg>
<svg style="position:absolute;left:48px;top:1519.2px;" width="48" height="36" viewBox="0 0 48 36"><rect x="1.3" y="1.3" width="14" height="33.4" fill="#a8d4a8" stroke="#5aa56b" stroke-width="2.6"/><rect x="15.3" y="1.3" width="17.4" height="33.4" fill="#eef5fc" stroke="#a3b8d6" stroke-width="2.6"/><rect x="32.7" y="1.3" width="14" height="33.4" fill="#f49090" stroke="#bb4a42" stroke-width="2.6"/></svg>
<svg style="position:absolute;left:48px;top:1598.3200000000002px;" width="48" height="36" viewBox="0 0 48 36"><rect x="1.3" y="1.3" width="14" height="33.4" fill="#a8d4a8" stroke="#5aa56b" stroke-width="2.6"/><rect x="15.3" y="1.3" width="17.4" height="33.4" fill="#eef5fc" stroke="#a3b8d6" stroke-width="2.6"/><rect x="32.7" y="1.3" width="14" height="33.4" fill="#fcc888" stroke="#c98a4a" stroke-width="2.6"/></svg>
<svg style="position:absolute;left:48px;top:1677.44px;" width="48" height="36" viewBox="0 0 48 36"><rect x="1.3" y="1.3" width="14" height="33.4" fill="#82adeb" stroke="#4a77bf" stroke-width="2.6"/><rect x="15.3" y="1.3" width="17.4" height="33.4" fill="#eef5fc" stroke="#a3b8d6" stroke-width="2.6"/><rect x="32.7" y="1.3" width="14" height="33.4" fill="#f49090" stroke="#bb4a42" stroke-width="2.6"/></svg>
<svg style="position:absolute;left:48px;top:1756.56px;" width="48" height="36" viewBox="0 0 48 36"><rect x="1.3" y="1.3" width="45.4" height="16.7" fill="#eef5fc" stroke="#a3b8d6" stroke-width="2.6"/><rect x="1.3" y="18" width="45.4" height="16.7" fill="#f49090" stroke="#bb4a42" stroke-width="2.6"/><path d="M1.3,1.3 L22,18 L1.3,34.7 Z" fill="#82adeb" stroke="#4a77bf" stroke-width="2.6"/></svg>
<svg style="position:absolute;left:48px;top:1835.68px;" width="48" height="36" viewBox="0 0 48 36"><rect x="1.3" y="1.3" width="45.4" height="33.4" fill="#f49090" stroke="#bb4a42" stroke-width="2.6"/><rect x="1.3" y="10" width="45.4" height="16" fill="#fde9a0"/><line x1="1.3" y1="10" x2="46.7" y2="10" stroke="#bb4a42" stroke-width="2.6"/><line x1="1.3" y1="26" x2="46.7" y2="26" stroke="#bb4a42" stroke-width="2.6"/><path d="M12,13 L18,13 L18,21 Q15,24 12,21 Z" fill="#f49090" stroke="#bb4a42" stroke-width="1.8"/></svg>
<svg style="position:absolute;left:78px;top:1940px;" width="42" height="32" viewBox="0 0 42 32"><line x1="4" y1="3" x2="4" y2="28" stroke="#5a6470" stroke-width="3"/><path d="M22,4 L11,16 L22,28 M34,4 L23,16 L34,28" fill="none" stroke="#5a6470" stroke-width="3"/></svg>
<svg style="position:absolute;left:155px;top:1940px;" width="36" height="32" viewBox="0 0 36 32"><path d="M16,4 L5,16 L16,28 M28,4 L17,16 L28,28" fill="none" stroke="#5a6470" stroke-width="3"/></svg>
<svg style="position:absolute;left:232px;top:1940px;" width="24" height="32" viewBox="0 0 24 32"><path d="M18,4 L6,16 L18,28" fill="none" stroke="#5a6470" stroke-width="3"/></svg>
<svg style="position:absolute;left:762px;top:1940px;" width="24" height="32" viewBox="0 0 24 32"><path d="M5,4 L17,16 L5,28" fill="none" stroke="#1f1f1f" stroke-width="3"/></svg>
<svg style="position:absolute;left:828px;top:1940px;" width="36" height="32" viewBox="0 0 36 32"><path d="M5,4 L16,16 L5,28 M17,4 L28,16 L17,28" fill="none" stroke="#1f1f1f" stroke-width="3"/></svg>
<svg style="position:absolute;left:897px;top:1940px;" width="42" height="32" viewBox="0 0 42 32"><path d="M5,4 L16,16 L5,28 M17,4 L28,16 L17,28" fill="none" stroke="#1f1f1f" stroke-width="3"/><line x1="36" y1="4" x2="36" y2="28" stroke="#1f1f1f" stroke-width="3"/></svg>
<div style="position:absolute;left:53.5px;top:570.6px;font-size:36px;line-height:36px;font-weight:400;color:#1b1b1b;white-space:nowrap;transform:scaleX(0.9321);transform-origin:0 0;-webkit-text-stroke:0.5px #f9f9f9;">États</div>
<div style="position:absolute;left:501.9px;top:571.2px;font-size:36px;line-height:36px;font-weight:400;color:#1b1b1b;white-space:nowrap;transform:scaleX(0.9600);transform-origin:0 0;-webkit-text-stroke:0.5px #f9f9f9;">Langue</div>
<div style="position:absolute;left:112.7px;top:728.6px;font-size:36px;line-height:36px;font-weight:400;color:#1b1b1b;white-space:nowrap;transform:scaleX(0.9444);transform-origin:0 0;-webkit-text-stroke:0.5px #e4e4e4;">France</div>
<div style="position:absolute;left:496.9px;top:728.6px;font-size:36px;line-height:36px;font-weight:400;color:#1b1b1b;white-space:nowrap;transform:scaleX(0.8700);transform-origin:0 0;-webkit-text-stroke:0.5px #e4e4e4;">FRANÇAIS</div>
<div style="position:absolute;left:114.5px;top:807.7px;font-size:36px;line-height:36px;font-weight:400;color:#1b1b1b;white-space:nowrap;transform:scaleX(1.0085);transform-origin:0 0;-webkit-text-stroke:0.5px #ffffff;">Turquie</div>
<div style="position:absolute;left:498.6px;top:807.7px;font-size:36px;line-height:36px;font-weight:400;color:#1b1b1b;white-space:nowrap;transform:scaleX(0.8700);transform-origin:0 0;-webkit-text-stroke:0.5px #ffffff;">TURC</div>
<div style="position:absolute;left:112.7px;top:886.9px;font-size:36px;line-height:36px;font-weight:400;color:#1b1b1b;white-space:nowrap;transform:scaleX(0.9493);transform-origin:0 0;-webkit-text-stroke:0.5px #ffffff;">Espagne</div>
<div style="position:absolute;left:496.9px;top:886.9px;font-size:36px;line-height:36px;font-weight:400;color:#1b1b1b;white-space:nowrap;transform:scaleX(0.8700);transform-origin:0 0;-webkit-text-stroke:0.5px #ffffff;">ESPAGNOL</div>
<div style="position:absolute;left:112.5px;top:966.0px;font-size:36px;line-height:36px;font-weight:400;color:#1b1b1b;white-space:nowrap;transform:scaleX(0.9927);transform-origin:0 0;-webkit-text-stroke:0.5px #ffffff;">République de Serbie</div>
<div style="position:absolute;left:497.8px;top:966.0px;font-size:36px;line-height:36px;font-weight:400;color:#1b1b1b;white-space:nowrap;transform:scaleX(0.8700);transform-origin:0 0;-webkit-text-stroke:0.5px #ffffff;">SERBE</div>
<div style="position:absolute;left:113.5px;top:1045.1px;font-size:36px;line-height:36px;font-weight:400;color:#1b1b1b;white-space:nowrap;transform:scaleX(0.9806);transform-origin:0 0;-webkit-text-stroke:0.5px #ffffff;">Slovaquie</div>
<div style="position:absolute;left:497.8px;top:1045.1px;font-size:36px;line-height:36px;font-weight:400;color:#1b1b1b;white-space:nowrap;transform:scaleX(0.8700);transform-origin:0 0;-webkit-text-stroke:0.5px #ffffff;">SLOVAQUE</div>
<div style="position:absolute;left:112.5px;top:1124.2px;font-size:36px;line-height:36px;font-weight:400;color:#1b1b1b;white-space:nowrap;transform:scaleX(0.9969);transform-origin:0 0;-webkit-text-stroke:0.5px #ffffff;">Roumanie</div>
<div style="position:absolute;left:496.9px;top:1124.2px;font-size:36px;line-height:36px;font-weight:400;color:#1b1b1b;white-space:nowrap;transform:scaleX(0.8700);transform-origin:0 0;-webkit-text-stroke:0.5px #ffffff;">ROUMAIN</div>
<div style="position:absolute;left:112.5px;top:1203.3px;font-size:36px;line-height:36px;font-weight:400;color:#1b1b1b;white-space:nowrap;transform:scaleX(1.0117);transform-origin:0 0;-webkit-text-stroke:0.5px #ffffff;">Pologne</div>
<div style="position:absolute;left:496.9px;top:1203.3px;font-size:36px;line-height:36px;font-weight:400;color:#1b1b1b;white-space:nowrap;transform:scaleX(0.8700);transform-origin:0 0;-webkit-text-stroke:0.5px #ffffff;">POLONAIS</div>
<div style="position:absolute;left:112.4px;top:1282.5px;font-size:36px;line-height:36px;font-weight:400;color:#1b1b1b;white-space:nowrap;transform:scaleX(1.0271);transform-origin:0 0;-webkit-text-stroke:0.5px #ffffff;">Portugal</div>
<div style="position:absolute;left:496.9px;top:1282.5px;font-size:36px;line-height:36px;font-weight:400;color:#1b1b1b;white-space:nowrap;transform:scaleX(0.8700);transform-origin:0 0;-webkit-text-stroke:0.5px #ffffff;">PORTUGAIS</div>
<div style="position:absolute;left:112.4px;top:1361.6px;font-size:36px;line-height:36px;font-weight:400;color:#1b1b1b;white-space:nowrap;transform:scaleX(1.0492);transform-origin:0 0;-webkit-text-stroke:0.5px #ffffff;">Hongrie</div>
<div style="position:absolute;left:496.9px;top:1361.6px;font-size:36px;line-height:36px;font-weight:400;color:#1b1b1b;white-space:nowrap;transform:scaleX(0.8700);transform-origin:0 0;-webkit-text-stroke:0.5px #ffffff;">HONGROIS</div>
<div style="position:absolute;left:115.5px;top:1440.7px;font-size:36px;line-height:36px;font-weight:400;color:#1b1b1b;white-space:nowrap;transform:scaleX(0.9970);transform-origin:0 0;-webkit-text-stroke:0.5px #ffffff;">Allemagne</div>
<div style="position:absolute;left:499.5px;top:1440.7px;font-size:36px;line-height:36px;font-weight:400;color:#1b1b1b;white-space:nowrap;transform:scaleX(0.8700);transform-origin:0 0;-webkit-text-stroke:0.5px #ffffff;">ALLEMAND</div>
<div style="position:absolute;left:112.3px;top:1519.8px;font-size:36px;line-height:36px;font-weight:400;color:#1b1b1b;white-space:nowrap;transform:scaleX(1.0556);transform-origin:0 0;-webkit-text-stroke:0.5px #ffffff;">Italie</div>
<div style="position:absolute;left:496.9px;top:1519.8px;font-size:36px;line-height:36px;font-weight:400;color:#1b1b1b;white-space:nowrap;transform:scaleX(0.8700);transform-origin:0 0;-webkit-text-stroke:0.5px #ffffff;">ITALIEN</div>
<div style="position:absolute;left:112.4px;top:1598.9px;font-size:36px;line-height:36px;font-weight:400;color:#1b1b1b;white-space:nowrap;transform:scaleX(1.0236);transform-origin:0 0;-webkit-text-stroke:0.5px #ffffff;">Irlande</div>
<div style="position:absolute;left:499.5px;top:1598.9px;font-size:36px;line-height:36px;font-weight:400;color:#1b1b1b;white-space:nowrap;transform:scaleX(0.8700);transform-origin:0 0;-webkit-text-stroke:0.5px #ffffff;">ANGLAIS</div>
<div style="position:absolute;left:112.7px;top:1678.1px;font-size:36px;line-height:36px;font-weight:400;color:#1b1b1b;white-space:nowrap;transform:scaleX(0.9444);transform-origin:0 0;-webkit-text-stroke:0.5px #ffffff;">France</div>
<div style="position:absolute;left:496.9px;top:1678.1px;font-size:36px;line-height:36px;font-weight:400;color:#1b1b1b;white-space:nowrap;transform:scaleX(0.8700);transform-origin:0 0;-webkit-text-stroke:0.5px #ffffff;">FRANÇAIS</div>
<div style="position:absolute;left:112.5px;top:1757.2px;font-size:36px;line-height:36px;font-weight:400;color:#1b1b1b;white-space:nowrap;transform:scaleX(1.0053);transform-origin:0 0;-webkit-text-stroke:0.5px #ffffff;">République Tchèque</div>
<div style="position:absolute;left:498.6px;top:1757.2px;font-size:36px;line-height:36px;font-weight:400;color:#1b1b1b;white-space:nowrap;transform:scaleX(0.8700);transform-origin:0 0;-webkit-text-stroke:0.5px #ffffff;">TCHÈQUE</div>
<div style="position:absolute;left:112.7px;top:1836.3px;font-size:36px;line-height:36px;font-weight:400;color:#1b1b1b;white-space:nowrap;transform:scaleX(0.9493);transform-origin:0 0;-webkit-text-stroke:0.5px #ffffff;">Espagne</div>
<div style="position:absolute;left:496.9px;top:1836.3px;font-size:36px;line-height:36px;font-weight:400;color:#1b1b1b;white-space:nowrap;transform:scaleX(0.8700);transform-origin:0 0;-webkit-text-stroke:0.5px #ffffff;">ESPAGNOL</div>
<div style="position:absolute;left:309.4px;top:1940.7px;font-size:36px;line-height:36px;font-weight:400;color:#1b1b1b;white-space:nowrap;transform:scaleX(0.9812);transform-origin:0 0;-webkit-text-stroke:0.5px #ffffff;">Enregistrement 1 sur 216</div>
<div style="position:absolute;left:594px;top:523px;width:2904px;height:1408px;background:#f3f3f3;border:3px solid #b3b3b7;border-bottom-color:#a2a2a4;border-radius:21px;box-shadow:0 40px 90px -10px rgba(0,0,0,0.13),0 90px 190px -20px rgba(0,0,0,0.15),0 2px 8px rgba(0,0,0,0.06);"></div>
<svg style="position:absolute;left:618.7px;top:540.7px;" width="52.6" height="52.6" viewBox="0 0 52.6 52.6"><path d="M26.30,5.00 A21.3,21.3 0 1 1 5.00,26.30" fill="none" stroke="#3d8bd0" stroke-width="5" stroke-linecap="round"/><path d="M26.30,13.80 A12.5,12.5 0 1 0 38.80,26.30" fill="none" stroke="#3d8bd0" stroke-width="5" stroke-linecap="round"/><circle cx="26.3" cy="26.3" r="7" fill="#5aa56b"/></svg>
<svg style="position:absolute;left:3298px;top:549px;" width="34" height="35" viewBox="0 0 34 35"><rect x="3" y="3.5" width="28" height="28.5" rx="4" fill="none" stroke="#1b1b1b" stroke-width="2.8"/></svg>
<svg style="position:absolute;left:3419px;top:549px;" width="36" height="36" viewBox="0 0 36 36"><path d="M2.5,2.5 L33.5,33.5 M33.5,2.5 L2.5,33.5" stroke="#1b1b1b" stroke-width="2.8"/></svg>
<div style="position:absolute;left:1043px;top:650.6px;width:2418px;height:74.39999999999998px;background:#fff;border:2.5px solid #e5e5e5;border-bottom:3px solid #9c9c9c;border-radius:12px;"></div>
<svg style="position:absolute;left:3408px;top:677.6px;" width="34" height="22" viewBox="0 0 34 22"><path d="M4,4 L17,17 L30,4" fill="none" stroke="#1b1b1b" stroke-width="3"/></svg>
<div style="position:absolute;left:1043px;top:740.4px;width:2418px;height:74.30000000000007px;background:#fff;border:2.5px solid #e5e5e5;border-bottom:3px solid #9c9c9c;border-radius:12px;"></div>
<svg style="position:absolute;left:3408px;top:767.4px;" width="34" height="22" viewBox="0 0 34 22"><path d="M4,4 L17,17 L30,4" fill="none" stroke="#1b1b1b" stroke-width="3"/></svg>
<div style="position:absolute;left:1043px;top:828.8px;width:2418px;height:74px;background:#f9f9f9;border:2.5px solid #e3e3e3;border-radius:12px;"></div>
<svg style="position:absolute;left:1061px;top:844px;" width="48" height="36" viewBox="0 0 48 36"><rect x="1.3" y="1.3" width="14" height="33.4" fill="#82adeb" stroke="#4a77bf" stroke-width="2.6"/><rect x="15.3" y="1.3" width="17.4" height="33.4" fill="#eef5fc" stroke="#a3b8d6" stroke-width="2.6"/><rect x="32.7" y="1.3" width="14" height="33.4" fill="#f49090" stroke="#bb4a42" stroke-width="2.6"/></svg>
<div style="position:absolute;left:1043px;top:923.5px;width:48px;height:47.5px;background:#fff;border:2.5px solid #cdcdcd;border-radius:10px;"></div>
<div style="position:absolute;left:632px;top:991px;width:2829px;height:741px;background:#fff;border:3px solid #d0d0d0;border-radius:14px;"></div>
<div style="position:absolute;left:635px;top:994px;width:2823px;height:57px;background:#fafafa;border-radius:11px 11px 0 0;"></div>
<div style="position:absolute;left:635px;top:1051px;width:2823px;height:3px;background:#d0d0d0;"></div>
<div style="position:absolute;left:635px;top:1054px;width:2823px;height:82px;background:#fafafa;"></div>
<div style="position:absolute;left:635px;top:1136px;width:2823px;height:79px;background:#edf4fe;"></div>
<div style="position:absolute;left:635px;top:1135px;width:2823px;height:3px;background:#e4e4e4;"></div>
<div style="position:absolute;left:635px;top:1214px;width:2823px;height:3px;background:#e4e4e4;"></div>
<div style="position:absolute;left:635px;top:1293px;width:2823px;height:3px;background:#e4e4e4;"></div>
<div style="position:absolute;left:842px;top:1054px;width:3px;height:240px;background:#e4e4e4;"></div>
<div style="position:absolute;left:1006px;top:1054px;width:3px;height:240px;background:#e4e4e4;"></div>
<div style="position:absolute;left:1672px;top:1054px;width:3px;height:240px;background:#e4e4e4;"></div>
<div style="position:absolute;left:2948px;top:1054px;width:3px;height:240px;background:#e4e4e4;"></div>
<svg style="position:absolute;left:647px;top:1154.2px;" width="46" height="46" viewBox="0 0 46 46"><rect x="8.5" y="8.5" width="29" height="29" rx="5" transform="rotate(45 23 23)" fill="#f49090" stroke="#bb4a42" stroke-width="2.8"/></svg>
<svg style="position:absolute;left:647px;top:1233.8px;" width="46" height="46" viewBox="0 0 46 46"><rect x="8.5" y="8.5" width="29" height="29" rx="5" transform="rotate(45 23 23)" fill="#f49090" stroke="#bb4a42" stroke-width="2.8"/></svg>
<div style="position:absolute;left:638px;top:1797px;width:392px;height:86px;background:#fff;border:3px solid #d6d6d6;border-radius:14px;"></div>
<svg style="position:absolute;left:659px;top:1814px;" width="54" height="52" viewBox="0 0 54 52"><path d="M2,8 L28,2 L28,50 L2,44 Z" fill="#a8d4a8" stroke="#5aa56b" stroke-width="2.6"/><rect x="28" y="10" width="23" height="32" fill="#eef5f0" stroke="#5aa56b" stroke-width="2.4"/><g fill="#a8c8b0"><rect x="31" y="15" width="16" height="2"/><rect x="31" y="20" width="16" height="2"/><rect x="31" y="25" width="16" height="2"/><rect x="31" y="30" width="16" height="2"/><rect x="31" y="35" width="16" height="2"/></g><path d="M8,16 L13,16 L16,22 L19,16 L24,16 L19,26 L24,36 L19,36 L16,30 L13,36 L8,36 L13,26 Z" fill="#fff"/></svg>
<div style="position:absolute;left:1055px;top:1797px;width:504px;height:86px;background:#fff;border:3px solid #d6d6d6;border-radius:14px;"></div>
<svg style="position:absolute;left:1076px;top:1812px;" width="54" height="54" viewBox="0 0 54 54"><g stroke="#b4b4b8" stroke-width="4" stroke-linecap="round"><line x1="4" y1="27" x2="18" y2="27"/><line x1="36" y1="27" x2="50" y2="27"/><line x1="27" y1="36" x2="27" y2="50"/><line x1="9" y1="9" x2="18.5" y2="18.5"/><line x1="45" y1="9" x2="35.5" y2="18.5"/><line x1="9" y1="45" x2="18.5" y2="35.5"/><line x1="45" y1="45" x2="35.5" y2="35.5"/></g><path d="M24,4 Q27,1 30,4 L28.2,21 L25.8,21 Z" fill="#4a3a8a"/><circle cx="27" cy="26.5" r="2.3" fill="#4a3a8a"/></svg>
<div style="position:absolute;left:2491px;top:1796px;width:547px;height:88px;background:#fff;border:5.5px solid #2e75ae;border-radius:14px;"></div>
<svg style="position:absolute;left:2513px;top:1815px;" width="49" height="49" viewBox="0 0 49 49"><circle cx="24.5" cy="24.5" r="21.5" fill="#89b4ec" stroke="#4a77bf" stroke-width="3"/><rect x="22.5" y="20" width="4.5" height="15" fill="#fff"/><rect x="19" y="33" width="11" height="3" fill="#fff"/><rect x="19" y="20" width="6" height="3" fill="#fff"/><circle cx="24.5" cy="13.5" r="2.5" fill="#fff"/></svg>
<div style="position:absolute;left:3062px;top:1797px;width:393px;height:86px;background:#fff;border:3px solid #d6d6d6;border-radius:14px;"></div>
<svg style="position:absolute;left:3085px;top:1817px;" width="46" height="46" viewBox="0 0 46 46"><g transform="scale(1.0)"><path d="M2,8 L8,2 L23,17 L38,2 L44,8 L29,23 L44,38 L38,44 L23,29 L8,44 L2,38 L17,23 Z" fill="#f08a8a" stroke="#bb4a42" stroke-width="2"/><path d="M6,6 L40,40 M40,6 L6,40" stroke="#fbc4c4" stroke-width="1.2" opacity="0.9"/></g></svg>
<div style="position:absolute;left:692.0px;top:552.3px;font-size:36px;line-height:36px;font-weight:400;color:#1b1b1b;white-space:nowrap;transform:scaleX(1.0046);transform-origin:0 0;-webkit-text-stroke:0.5px #f3f3f3;">Poison Centre Notification</div>
<div style="position:absolute;left:631.9px;top:673.1px;font-size:36px;line-height:36px;font-weight:400;color:#1b1b1b;white-space:nowrap;transform:scaleX(1.0199);transform-origin:0 0;-webkit-text-stroke:0.5px #f3f3f3;">Type de notification</div>
<div style="position:absolute;left:630.9px;top:763.2px;font-size:36px;line-height:36px;font-weight:400;color:#1b1b1b;white-space:nowrap;transform:scaleX(1.0238);transform-origin:0 0;-webkit-text-stroke:0.5px #f3f3f3;">Informateur</div>
<div style="position:absolute;left:631.0px;top:850.6px;font-size:36px;line-height:36px;font-weight:400;color:#1b1b1b;white-space:nowrap;transform:scaleX(1.0031);transform-origin:0 0;-webkit-text-stroke:0.5px #f3f3f3;">Marché actif</div>
<div style="position:absolute;left:1053.3px;top:671.7px;font-size:36px;line-height:36px;font-weight:400;color:#1b1b1b;white-space:nowrap;transform:scaleX(1.0448);transform-origin:0 0;-webkit-text-stroke:0.5px #ffffff;">Notification initiale</div>
<div style="position:absolute;left:1055.4px;top:761.5px;font-size:36px;line-height:36px;font-weight:400;color:#1b1b1b;white-space:nowrap;transform:scaleX(0.9943);transform-origin:0 0;-webkit-text-stroke:0.5px #ffffff;">Trial ltd.</div>
<div style="position:absolute;left:1128.1px;top:848.8px;font-size:36px;line-height:36px;font-weight:400;color:#1b1b1b;white-space:nowrap;transform:scaleX(0.9454);transform-origin:0 0;-webkit-text-stroke:0.5px #f9f9f9;">France</div>
<div style="position:absolute;left:1104.4px;top:930.9px;font-size:36px;line-height:36px;font-weight:400;color:#1b1b1b;white-space:nowrap;transform:scaleX(0.9754);transform-origin:0 0;-webkit-text-stroke:0.5px #f3f3f3;">Joindre la fiche de données de sécurité en PDF</div>
<div style="position:absolute;left:667.4px;top:1007.2px;font-size:36px;line-height:36px;font-weight:400;color:#1b1b1b;white-space:nowrap;transform:scaleX(0.9665);transform-origin:0 0;-webkit-text-stroke:0.5px #fafafa;">Erreurs et avertissements</div>
<div style="position:absolute;left:652.0px;top:1079.2px;font-size:36px;line-height:36px;font-weight:400;color:#1b1b1b;white-space:nowrap;transform:scaleX(0.9803);transform-origin:0 0;-webkit-text-stroke:0.5px #fafafa;">Type</div>
<div style="position:absolute;left:860.5px;top:1079.2px;font-size:36px;line-height:36px;font-weight:400;color:#1b1b1b;white-space:nowrap;transform:scaleX(0.9675);transform-origin:0 0;-webkit-text-stroke:0.5px #fafafa;">Code</div>
<div style="position:absolute;left:1022.6px;top:1079.2px;font-size:36px;line-height:36px;font-weight:400;color:#1b1b1b;white-space:nowrap;transform:scaleX(0.9858);transform-origin:0 0;-webkit-text-stroke:0.5px #fafafa;">La fiche de données de sécurité</div>
<div style="position:absolute;left:1688.7px;top:1079.2px;font-size:36px;line-height:36px;font-weight:400;color:#1b1b1b;white-space:nowrap;transform:scaleX(1.0251);transform-origin:0 0;-webkit-text-stroke:0.5px #fafafa;">Description</div>
<div style="position:absolute;left:2967.4px;top:1079.2px;font-size:36px;line-height:36px;font-weight:400;color:#1b1b1b;white-space:nowrap;transform:scaleX(0.9931);transform-origin:0 0;-webkit-text-stroke:0.5px #fafafa;">Valeur</div>
<div style="position:absolute;left:709.8px;top:1158.4px;font-size:36px;line-height:36px;font-weight:400;color:#1b1b1b;white-space:nowrap;transform:scaleX(0.9742);transform-origin:0 0;-webkit-text-stroke:0.5px #edf4fe;">Erreur</div>
<div style="position:absolute;left:856.1px;top:1158.4px;font-size:36px;line-height:36px;font-weight:400;color:#1b1b1b;white-space:nowrap;transform:scaleX(0.9217);transform-origin:0 0;-webkit-text-stroke:0.5px #edf4fe;">BR530</div>
<div style="position:absolute;left:1019.3px;top:1158.4px;font-size:36px;line-height:36px;font-weight:400;color:#1b1b1b;white-space:nowrap;transform:scaleX(0.9669);transform-origin:0 0;-webkit-text-stroke:0.5px #edf4fe;">MODÈLE Mélange dangereux</div>
<div style="position:absolute;left:1685.6px;top:1158.4px;font-size:36px;line-height:36px;font-weight:400;color:#1b1b1b;white-space:nowrap;transform:scaleX(0.9857);transform-origin:0 0;-webkit-text-stroke:0.5px #edf4fe;">Spécifiez la couleur dans la section 9 "Propriétés".</div>
<div style="position:absolute;left:2961.4px;top:1158.4px;font-size:36px;line-height:36px;font-weight:400;color:#1b1b1b;white-space:nowrap;transform:scaleX(0.9675);transform-origin:0 0;-webkit-text-stroke:0.5px #edf4fe;">MODÈLE Mélange dangereux</div>
<div style="position:absolute;left:709.8px;top:1238.0px;font-size:36px;line-height:36px;font-weight:400;color:#1b1b1b;white-space:nowrap;transform:scaleX(0.9742);transform-origin:0 0;-webkit-text-stroke:0.5px #ffffff;">Erreur</div>
<div style="position:absolute;left:856.1px;top:1238.0px;font-size:36px;line-height:36px;font-weight:400;color:#1b1b1b;white-space:nowrap;transform:scaleX(0.9217);transform-origin:0 0;-webkit-text-stroke:0.5px #ffffff;">BR534</div>
<div style="position:absolute;left:1019.3px;top:1238.0px;font-size:36px;line-height:36px;font-weight:400;color:#1b1b1b;white-space:nowrap;transform:scaleX(0.9669);transform-origin:0 0;-webkit-text-stroke:0.5px #ffffff;">MODÈLE Mélange dangereux</div>
<div style="position:absolute;left:1687.6px;top:1238.0px;font-size:36px;line-height:36px;font-weight:400;color:#1b1b1b;white-space:nowrap;transform:scaleX(0.9892);transform-origin:0 0;-webkit-text-stroke:0.5px #ffffff;">Ajoutez l'EuPCS (utilisation principale prévue) dans la section "Identification".</div>
<div style="position:absolute;left:2961.4px;top:1238.0px;font-size:36px;line-height:36px;font-weight:400;color:#1b1b1b;white-space:nowrap;transform:scaleX(0.9675);transform-origin:0 0;-webkit-text-stroke:0.5px #ffffff;">MODÈLE Mélange dangereux</div>
<div style="position:absolute;left:818.5px;top:1826.2px;font-size:36px;line-height:36px;font-weight:400;color:#1b1b1b;white-space:nowrap;transform:scaleX(0.9253);transform-origin:0 0;-webkit-text-stroke:0.5px #ffffff;">Excel</div>
<div style="position:absolute;left:1235.7px;top:1826.2px;font-size:36px;line-height:36px;font-weight:400;color:#1b1b1b;white-space:nowrap;transform:scaleX(0.9558);transform-origin:0 0;-webkit-text-stroke:0.5px #ffffff;">PCN dossier</div>
<div style="position:absolute;left:2617.4px;top:1826.2px;font-size:36px;line-height:36px;font-weight:400;color:#1b1b1b;white-space:nowrap;transform:scaleX(0.9906);transform-origin:0 0;-webkit-text-stroke:0.5px #ffffff;">Notifier en ligne (S<span style="font-size:26px;vertical-align:-5px">2</span>S)</div>
<div style="position:absolute;left:3223.3px;top:1826.2px;font-size:36px;line-height:36px;font-weight:400;color:#1b1b1b;white-space:nowrap;transform:scaleX(0.9855);transform-origin:0 0;-webkit-text-stroke:0.5px #ffffff;">Annuler</div>
</body></html>
